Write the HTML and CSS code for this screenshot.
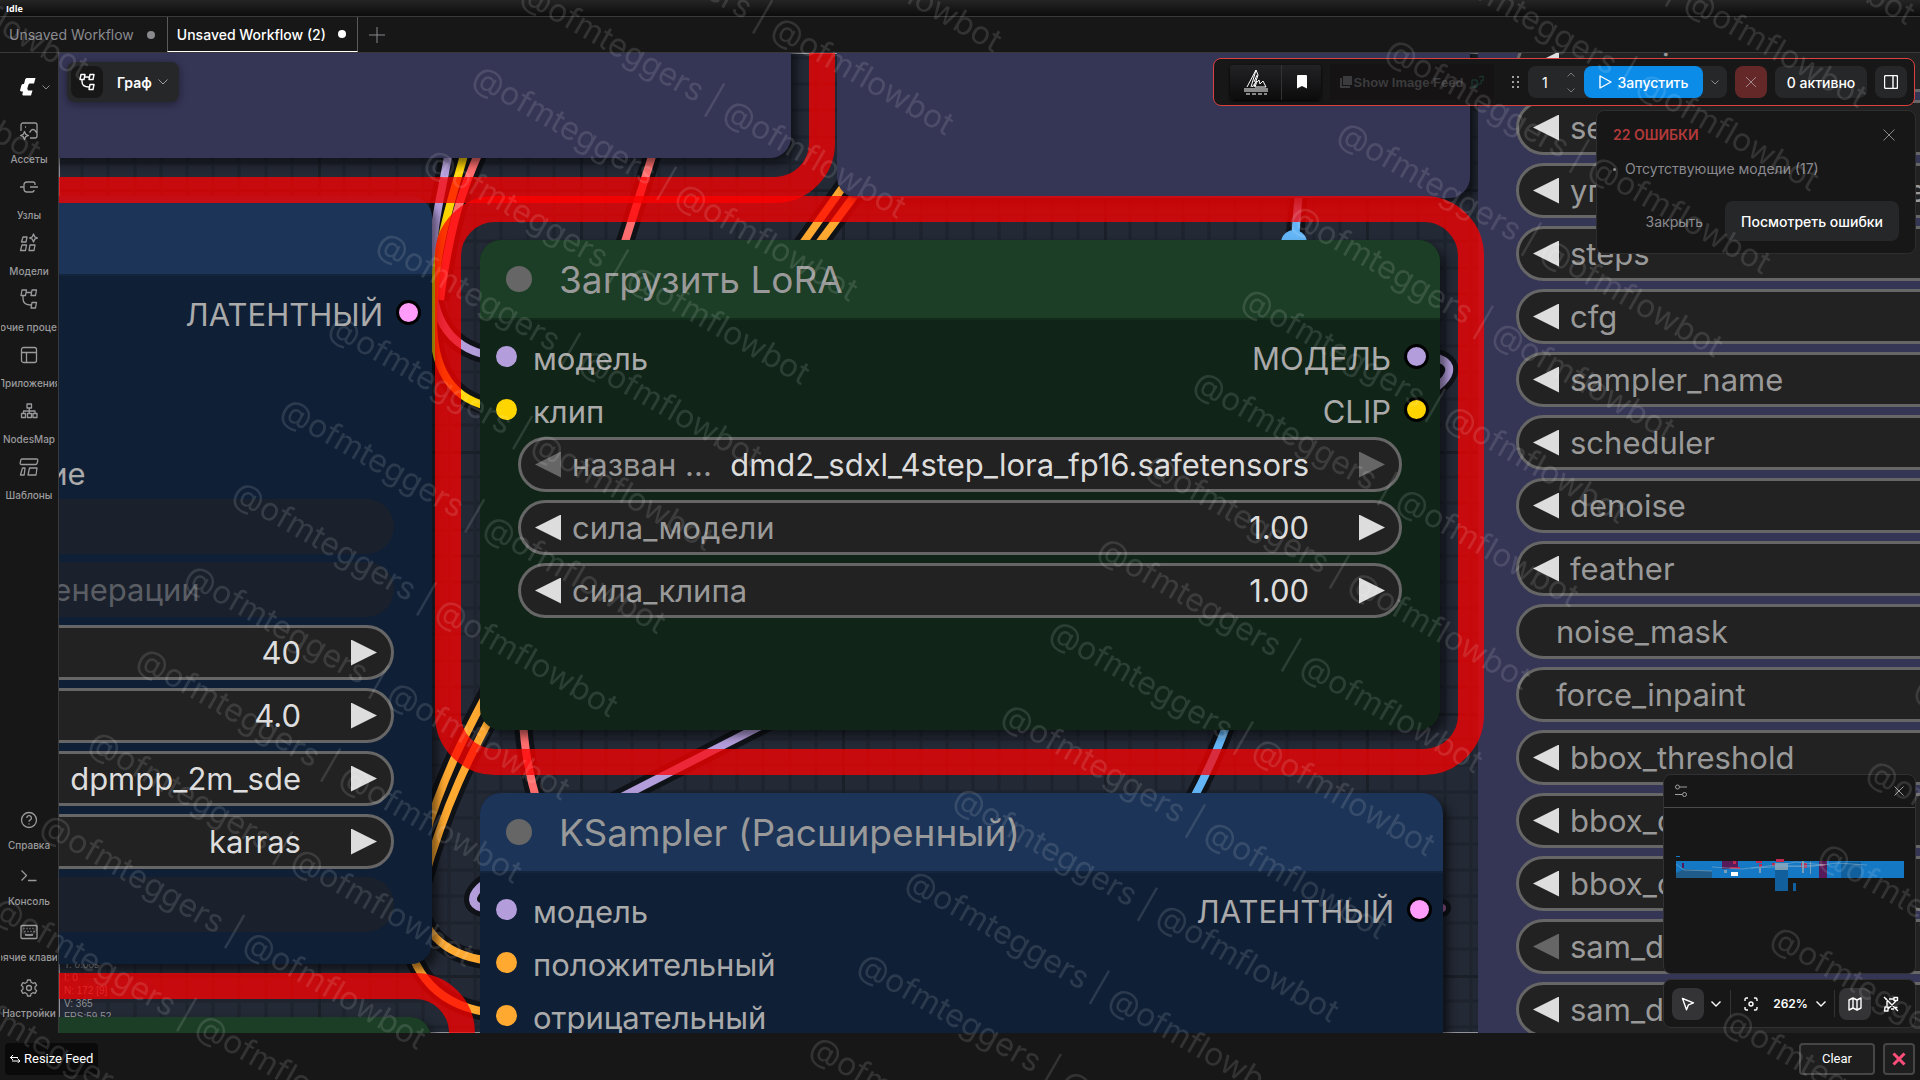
FILE: index.html
```html
<!DOCTYPE html>
<html lang="ru">
<head>
    <meta charset="UTF-8">
    <meta name="viewport" content="width=device-width, initial-scale=1.0">
    <title>Unsaved Workflow (2)</title>
    <link rel="stylesheet" href="styles.css">
</head>
<body>
    <header class="status-bar">Idle</header>

    <nav class="tabs">
        <button class="tab" type="button">Unsaved Workflow <span class="tab-dot"></span></button>
        <button class="tab active" type="button">Unsaved Workflow (2) <span class="tab-dot"></span></button>
        <button class="tab-add" type="button" aria-label="New workflow">
            <svg width="16" height="16" viewBox="0 0 16 16"><path d="M8 0v16M0 8h16"/></svg>
        </button>
    </nav>

    <div class="workspace">
        <aside class="sidebar">
            <button class="logo" type="button" aria-label="Menu">
                <svg width="16" height="18" viewBox="0 0 16 18"><path class="solid" d="M6.500 0H15.500L14 5.500H9.500L8.500 6.500L7.300 10.500L8 12.500H12.500L11 17.500H3L2.300 16.500L3 13.500H1L0 12.500L1.500 7L2.500 6H4L5.300 1Z"/></svg>
                <svg width="8" height="5" viewBox="0 0 8 5"><path d="M.5 .5l3.500 3.500l3.500-3.500"/></svg>
            </button>
            <div class="side-group">
                <button class="side-item" type="button">
                    <svg width="20" height="20" viewBox="0 0 20 20"><path d="M2 10V4a2 2 0 0 1 2-2h12a2 2 0 0 1 2 2v11a2 2 0 0 1-2 2h-5M18 12l-2.500-3q-1.500-1-3 0l-2 2.500M5.500 10.500l1.200 2.800 2.800 1.200-2.800 1.200-1.200 2.800-1.200-2.800-2.800-1.200 2.800-1.200zM6 6h1"/></svg>
                    <span>Ассеты</span>
                </button>
                <button class="side-item" type="button">
                    <svg width="20" height="20" viewBox="0 0 20 20"><path d="M1 10h4M15 10h4M16 8V7a2 2 0 0 0-2-2H8a3 3 0 0 0-3 3v4a3 3 0 0 0 3 3h5a2 2 0 0 0 2-2M11 10h4"/></svg>
                    <span>Узлы</span>
                </button>
                <button class="side-item" type="button">
                    <svg width="20" height="20" viewBox="0 0 20 20"><path d="M4 4h4l-1 5H2.500zM3 12h4.500l-1 5.500H1.500zM11 12h5l-1 5.500h-5zM14.500 1l1.200 2.800L18.500 5l-2.800 1.200L14.500 9l-1.200-2.800L10.500 5l2.800-1.200z"/></svg>
                    <span>Модели</span>
                </button>
                <button class="side-item" type="button">
                    <svg width="20" height="20" viewBox="0 0 20 20"><path d="M3 1h4.500l-1 5.500H2zM13 1h4.500l-1 5.500H12zM13 13.500h4.500l-1 5.500H12zM7.500 3.500h5M4 6.500v3q0 6.500 8 6.500"/></svg>
                    <span>Рабочие процессы</span>
                </button>
                <button class="side-item" type="button">
                    <svg width="20" height="20" viewBox="0 0 20 20"><rect x="2.500" y="2.500" width="15" height="15" rx="2"/><path d="M2.500 7.500h15M7.500 7.500v10"/></svg>
                    <span>Приложения</span>
                </button>
                <button class="side-item" type="button">
                    <svg width="20" height="20" viewBox="0 0 20 20"><path d="M8 3h4.500v4H8zM2.500 12.500h4v4h-4zM8.500 12.500h4v4h-4zM14 12.500h4v4h-4zM10.300 7v5.500M4.500 12.500V10h11.500v2.500"/></svg>
                    <span>NodesMap</span>
                </button>
                <button class="side-item" type="button">
                    <svg width="20" height="20" viewBox="0 0 20 20"><path d="M3 2h14.500q1.500 0 1.300 1.500l-.6 2.500q-.3 1.500-1.700 1.500H2.500Q1 7.500 1.200 6l.5-2.500Q2 2 3 2zM3.500 11h2.500l-.8 7H1.500zM10.500 11h7.500l-1 7H9z"/></svg>
                    <span>Шаблоны</span>
                </button>
            </div>
            <div class="side-group side-bottom">
                <button class="side-item" type="button">
                    <svg width="20" height="20" viewBox="0 0 20 20"><circle cx="10" cy="10" r="7.500"/><path d="M7.800 8a2.300 2.300 0 1 1 3.500 1.900Q10 10.600 10 11.700M10 13.500v1"/></svg>
                    <span>Справка</span>
                </button>
                <button class="side-item" type="button">
                    <svg width="20" height="20" viewBox="0 0 20 20"><path d="M2.500 4.500l5 5l-5 5M9 14.500h8.500"/></svg>
                    <span>Консоль</span>
                </button>
                <button class="side-item" type="button">
                    <svg width="20" height="20" viewBox="0 0 20 20"><rect x="2" y="3.500" width="16" height="13" rx="1"/><path d="M4.500 6.500h1M7.500 6.500h1M10.500 6.500h1M13.500 6.500h1M5.500 9.500h1M8.500 9.500h1M11.500 9.500h1M14.500 9.500h1M6 13h8"/></svg>
                    <span>Горячие клавиши</span>
                </button>
                <button class="side-item" type="button">
                    <svg width="20" height="20" viewBox="0 0 20 20"><circle cx="10" cy="10" r="2.500"/><path d="M8.500 2h3l.6 2.300 1.800 1 2.200-.7 1.600 2.700-1.700 1.600v2.200l1.700 1.600-1.600 2.700-2.200-.7-1.800 1-.6 2.300h-3l-.6-2.300-1.800-1-2.200.7-1.600-2.700L4 11.100V8.900L2.300 7.300l1.600-2.700 2.200.7 1.800-1z"/></svg>
                    <span>Настройки</span>
                </button>
            </div>
        </aside>

        <main class="canvas">
            <!-- grid and links, in window coordinates -->
            <svg class="links" width="100%" height="100%">
                <defs>
                    <pattern id="grid" patternUnits="userSpaceOnUse" x="318" y="189" width="262" height="262">
                        <path class="grid-minor" d="M26 0v262M52 0v262M79 0v262M105 0v262M131 0v262M157 0v262M183 0v262M210 0v262M236 0v262M0 26h262M0 52h262M0 79h262M0 105h262M0 131h262M0 157h262M0 183h262M0 210h262M0 236h262"/>
                        <path class="grid-major" d="M0 0v262M0 0h262"/>
                    </pattern>
                    <path id="l1" d="M449 150C443 190 432 220 432 275C432 330 460 356 506 357"/>
                    <path id="l2" d="M466 148C452 200 433 250 433 320C433 380 460 406 506 409"/>
                    <path id="l3" d="M480 150C462 190 450 225 440 300"/>
                    <path id="l4" d="M654 150L624 245"/>
                    <path id="l5" d="M848 180L798 250"/>
                    <path id="l6" d="M866 180L814 250"/>
                    <path id="l7" d="M1299 190L1295 240"/>
                    <path id="l8" d="M1420 355C1459 358 1459 376 1420 398"/>
                    <path id="l9" d="M800 706L600 808"/>
                    <path id="l10" d="M500 874C464 892 462 913 506 909"/>
                    <path id="l11" d="M1232 710C1222 740 1210 768 1190 805"/>
                    <path id="l12" d="M522 700C523 735 526 765 538 805"/>
                    <path id="l13" d="M497 675C470 725 445 770 424 840"/>
                    <path id="l14" d="M500 700C470 755 445 805 424 880"/>
                    <path id="l15" d="M418 900C424 940 455 961 506 962"/>
                    <path id="l16" d="M405 930C415 985 450 1012 506 1014"/>
                    <path id="l17" stroke-linecap="round" d="M1420 908h22"/>
                </defs>
                <g transform="translate(-59 -53)">
                    <rect x="59" y="53" width="100%" height="100%" fill="url(#grid)"/>
                    <g class="outline">
                        <use href="#l1"/><use href="#l3"/><use href="#l4"/><use href="#l5"/><use href="#l6"/><use href="#l7"/>
                        <use href="#l8"/><use href="#l9"/><use href="#l10"/><use href="#l11"/><use href="#l12"/><use href="#l13"/>
                        <use href="#l14"/><use href="#l15"/><use href="#l16"/><use href="#l17"/><use href="#l2"/>
                    </g>
                    <g class="link">
                        <use class="model" href="#l1"/>
                        <use class="vae" href="#l3"/>
                        <use class="clip" href="#l2"/>
                        <use class="vae" href="#l4"/>
                        <use class="cond" href="#l5"/>
                        <use class="cond" href="#l6"/>
                        <use class="image" href="#l7"/>
                        <use class="model" href="#l8"/>
                        <use class="model" href="#l9"/>
                        <use class="model" href="#l10"/>
                        <use class="image" href="#l11"/>
                        <use class="vae" href="#l12"/>
                        <use class="cond" href="#l13"/>
                        <use class="cond" href="#l14"/>
                        <use class="cond" href="#l15"/>
                        <use class="cond" href="#l16"/>
                        <use class="latent" href="#l17"/>
                    </g>
                    <circle class="link-center" cx="1294" cy="243" r="13"/>
                </g>
            </svg>

            <div class="stats">T: 0.00s<br>I: 0<br>N: 172 [9]<br>V: 365<br>FPS:59.52</div>

            <section class="node purple node-top-left"></section>
            <section class="node purple node-top-mid"></section>

            <section class="node purple node-detailer">
                <div class="widgets">
                    <div class="widget"><button class="prev" type="button" aria-label="-"></button><label>max_size</label></div>
                    <div class="widget"><button class="prev" type="button" aria-label="-"></button><label>seed</label></div>
                    <div class="widget"><button class="prev" type="button" aria-label="-"></button><label>управление после генерации</label></div>
                    <div class="widget"><button class="prev" type="button" aria-label="-"></button><label>steps</label></div>
                    <div class="widget"><button class="prev" type="button" aria-label="-"></button><label>cfg</label></div>
                    <div class="widget"><button class="prev" type="button" aria-label="-"></button><label>sampler_name</label></div>
                    <div class="widget"><button class="prev" type="button" aria-label="-"></button><label>scheduler</label></div>
                    <div class="widget"><button class="prev" type="button" aria-label="-"></button><label>denoise</label></div>
                    <div class="widget"><button class="prev" type="button" aria-label="-"></button><label>feather</label></div>
                    <div class="widget toggle"><label>noise_mask</label></div>
                    <div class="widget toggle"><label>force_inpaint</label></div>
                    <div class="widget"><button class="prev" type="button" aria-label="-"></button><label>bbox_threshold</label></div>
                    <div class="widget"><button class="prev" type="button" aria-label="-"></button><label>bbox_dilation</label></div>
                    <div class="widget"><button class="prev" type="button" aria-label="-"></button><label>bbox_crop_factor</label></div>
                    <div class="widget"><button class="prev" type="button" aria-label="-" disabled></button><label>sam_detection_hint</label></div>
                    <div class="widget"><button class="prev" type="button" aria-label="-"></button><label>sam_dilation</label></div>
                </div>
            </section>

            <section class="node blue node-sampler-left">
                <h2 class="node-title"></h2>
                <div class="slots">
                    <div class="slot"><span class="out">ЛАТЕНТНЫЙ<i class="dot latent ring"></i></span></div>
                    <div class="slot"></div>
                    <div class="slot"></div>
                    <div class="slot"><span class="in"><i class="dot latent"></i>скрытое_изображение</span></div>
                </div>
                <div class="widgets">
                    <div class="widget off"></div>
                    <div class="widget off"><label>управление после генерации</label></div>
                    <div class="widget"><label for="w-steps">steps</label><input id="w-steps" value="40"><button class="next" type="button" aria-label="+"></button></div>
                    <div class="widget"><label for="w-cfg">cfg</label><input id="w-cfg" value="4.0"><button class="next" type="button" aria-label="+"></button></div>
                    <div class="widget"><label for="w-sampler">имя</label><input id="w-sampler" value="dpmpp_2m_sde"><button class="next" type="button" aria-label="+"></button></div>
                    <div class="widget"><label for="w-sched">план</label><input id="w-sched" value="karras"><button class="next" type="button" aria-label="+"></button></div>
                    <div class="widget off"></div>
                </div>
            </section>

            <section class="node green node-bottom-left"><h2 class="node-title"></h2></section>

            <section class="node green node-lora">
                <h2 class="node-title"><i class="collapse"></i>Загрузить LoRA</h2>
                <div class="slots">
                    <div class="slot"><span class="in"><i class="dot model"></i>модель</span><span class="out">МОДЕЛЬ<i class="dot model ring"></i></span></div>
                    <div class="slot"><span class="in"><i class="dot clip"></i>клип</span><span class="out">CLIP<i class="dot clip ring"></i></span></div>
                </div>
                <div class="widgets">
                    <div class="widget"><button class="prev" type="button" aria-label="-" disabled></button><label for="w-name">назван ...</label><input id="w-name" value="dmd2_sdxl_4step_lora_fp16.safetensors"><button class="next" type="button" aria-label="+" disabled></button></div>
                    <div class="widget"><button class="prev" type="button" aria-label="-"></button><label for="w-sm">сила_модели</label><input id="w-sm" value="1.00"><button class="next" type="button" aria-label="+"></button></div>
                    <div class="widget"><button class="prev" type="button" aria-label="-"></button><label for="w-sc">сила_клипа</label><input id="w-sc" value="1.00"><button class="next" type="button" aria-label="+"></button></div>
                </div>
            </section>

            <section class="node blue node-ksampler">
                <h2 class="node-title"><i class="collapse"></i>KSampler (Расширенный)</h2>
                <div class="slots">
                    <div class="slot"><span class="in"><i class="dot model"></i>модель</span><span class="out">ЛАТЕНТНЫЙ<i class="dot latent ring"></i></span></div>
                    <div class="slot"><span class="in"><i class="dot cond"></i>положительный</span></div>
                    <div class="slot"><span class="in"><i class="dot cond"></i>отрицательный</span></div>
                </div>
            </section>

            <div class="frame frame-top"></div>
            <div class="frame frame-lora"></div>
            <div class="frame frame-bottom"></div>

            <div class="graph-menu">
                <button class="graph-icon" type="button" aria-label="Graph">
                    <svg width="16" height="18" viewBox="0 0 16 18"><path d="M2 1.500h4l-1 5H1zM11 1.500h4l-1 5h-4zM11 11.500h4l-1 5h-4zM6 4h4M3 6.500v2q0 5.500 7 5.500"/></svg>
                </button>
                <button class="graph-name" type="button">Граф
                    <svg width="10" height="6" viewBox="0 0 10 6"><path d="M.5 .5l4.500 4.500l4.500-4.500"/></svg>
                </button>
            </div>

            <div class="actionbar">
                <div class="group">
                    <button type="button" class="crystools" aria-label="Monitor">
                        <svg width="26" height="26" viewBox="0 0 26 26"><path d="M4 18L13 1l2 5-4 12M13 1L8 18M14 12l-5 6M11 13l3-7M15 18h-3q1-5 4-7l1 4 3-3 3 6zM1 20h24M1 22h24M3 25h4M9 25h4M15 25h4M21 25h3"/></svg>
                    </button>
                    <button type="button" class="bookmark" aria-label="Bookmark">
                        <svg width="12" height="14" viewBox="0 0 12 14"><path class="solid" d="M2 0h8q1 0 1 1v12.500L6 11l-5 2.500V1q0-1 1-1z"/></svg>
                    </button>
                </div>
                <button class="feed-toggle" type="button">
                    <svg width="12" height="12" viewBox="0 0 12 12"><path class="solid" d="M3 0h9v9H3zM0 2h2v8h8v2H0z"/></svg>Show Image Feed <svg class="bird" width="14" height="14" viewBox="0 0 14 14"><path d="M2 5h5v7H2zM7 9q6 1 4-4M9 2l4-1v5"/></svg>
                </button>
                <svg class="drag" width="8" height="14" viewBox="0 0 8 14"><path d="M0 2h2M5 2h2M0 7h2M5 7h2M0 12h2M5 12h2"/></svg>
                <div class="run-group">
                    <input class="batch" value="1" aria-label="Batch count">
                    <span class="spin">
                        <svg width="8" height="5" viewBox="0 0 8 5"><path d="M.5 4.500l3.500-3.500l3.500 3.500"/></svg>
                        <svg width="8" height="5" viewBox="0 0 8 5"><path d="M.5 .5l3.500 3.500l3.500-3.500"/></svg>
                    </span>
                    <button class="run" type="button">
                        <svg width="13" height="14" viewBox="0 0 13 14"><path d="M1 1l11 6l-11 6z"/></svg>Запустить
                    </button>
                    <button class="run-more" type="button" aria-label="More">
                        <svg width="8" height="5" viewBox="0 0 8 5"><path d="M.5 .5l3.500 3.500l3.500-3.500"/></svg>
                    </button>
                </div>
                <button class="stop" type="button" aria-label="Stop"><svg width="10" height="10" viewBox="0 0 10 10"><path d="M0 0l10 10M10 0l-10 10"/></svg></button>
                <button class="active-count" type="button">0 активно</button>
                <button class="panel" type="button" aria-label="Panel"><svg width="14" height="14" viewBox="0 0 14 14"><rect x=".5" y=".5" width="13" height="13" rx="1.500"/><path d="M9 .5v13"/></svg></button>
            </div>

            <div class="toast">
                <div class="toast-head">
                    <strong>22 ОШИБКИ</strong>
                    <button type="button" aria-label="Close"><svg width="12" height="12" viewBox="0 0 12 12"><path d="M.5 .5l11 11M11.500 .5l-11 11"/></svg></button>
                </div>
                <ul><li>Отсутствующие модели (17)</li></ul>
                <div class="toast-actions">
                    <button type="button" class="dismiss">Закрыть</button>
                    <button type="button" class="view">Посмотреть ошибки</button>
                </div>
            </div>

            <div class="corner">
                <div class="minimap">
                    <div class="minimap-head">
                        <button type="button" aria-label="Settings"><svg width="12" height="14" viewBox="0 0 12 14"><circle cx="2.500" cy="3" r="2"/><circle cx="9.500" cy="10.500" r="2"/><path d="M5 3h7M0 10.500h7"/></svg></button>
                        <button type="button" aria-label="Close"><svg width="10" height="10" viewBox="0 0 10 10"><path d="M.5 .5l9 9M9.500 .5l-9 9"/></svg></button>
                    </div>
                    <svg class="map" width="228" height="36" viewBox="0 0 228 36">
                        <path fill="#1478c4" d="M0 5h37v12H0zM0 17h8v1H0zM36 5h192v17H36zM0 0h4v1H0z"/>
                        <path fill="#1f5c8a" d="M8 13l28 2v7H0v-5z"/>
                        <path fill="#115f9c" d="M99 12h13v23H99zM117 27h3v8h-3zM165 6h20v16h-20z"/>
                        <path fill="#561b58" d="M46 5h16v8H46zM143 5h8v17h-8zM6 7h2v5H6z"/>
                        <path fill="#c02850" d="M54 11h10v2H54zM80 5h6v2h-6zM83 8h3v3h-3zM100 3h8v3h-8zM96 7h5v3h-5zM125 7h6v5h-6zM144 8h5v2h-5zM57 5h3v3h-3z"/>
                        <path fill="#7d9db5" d="M99 7h13v7H99zM126 5h2v12h-2zM134 6h1v12h-1zM83 12h2v5h-2zM48 14h3v3h-3z"/>
                        <path fill="none" stroke="#7dabcc" stroke-opacity=".6" d="M0 8l8 6 28 1M36 11l30 2 35-4 30 2 30-4 30 2M75 12l70-3M100 10l20-4 28 3"/>
                        <path fill="#fff" d="M55 16h7v4h-7z"/>
                    </svg>
                </div>
                <div class="view-controls">
                    <button type="button" class="on" aria-label="Select"><svg width="14" height="14" viewBox="0 0 14 14"><path d="M1.500 1.500l11 4.300-5 2-2 5z"/></svg></button>
                    <button type="button" class="small" aria-label="More"><svg width="10" height="6" viewBox="0 0 10 6"><path d="M.5 .5l4.500 4.500l4.500-4.500"/></svg></button>
                    <span class="divider"></span>
                    <button type="button" aria-label="Fit"><svg width="14" height="14" viewBox="0 0 14 14"><circle cx="7" cy="7" r="2"/><path d="M1 4V2.500q0-1.500 1.500-1.500H4M10 1h1.500Q13 1 13 2.500V4M13 10v1.500q0 1.500-1.500 1.500H10M4 13H2.500Q1 13 1 11.500V10"/></svg></button>
                    <button type="button" class="zoom">262% <svg width="10" height="6" viewBox="0 0 10 6"><path d="M.5 .5l4.500 4.500l4.500-4.500"/></svg></button>
                    <span class="divider"></span>
                    <button type="button" class="on" aria-label="Minimap"><svg width="14" height="14" viewBox="0 0 14 14"><path d="M1 3l4-2 4 2 4-2v10l-4 2-4-2-4 2zM5 1v10M9 3v10"/></svg></button>
                    <button type="button" class="links-off" aria-label="Hide links"><svg width="16" height="16" viewBox="0 0 16 16"><path d="M1 1l14 14M2 11h3v4H1.500zM11 1.500h3.500v3H11zM11.500 11.500h3M6 3h5M4 5v5M8 13h3M13 5L5 13M3 2v2"/></svg></button>
                </div>
            </div>
        </main>
    </div>

    <footer class="feed-bar">
        <button class="resize" type="button"><svg width="10" height="8" viewBox="0 0 10 8"><path d="M0 2.500h8M3 0L.5 2.500 3 5M2 6h8M7.500 3.500L10 6 7.500 8"/></svg>Resize Feed</button>
        <div class="feed-actions">
            <button class="clear" type="button">Clear</button>
            <button class="close" type="button" aria-label="Close"><svg width="14" height="14" viewBox="0 0 14 14"><path d="M1.500 1.500l11 11M12.500 1.500l-11 11"/></svg></button>
        </div>
    </footer>

    <svg class="watermark" width="100%" height="100%" aria-hidden="true">
        <g id="marks" transform="rotate(30)"></g>
    </svg>

    <script>
        // repeat the watermark line over the whole window
        const marks = document.getElementById('marks');
        const stepX = 777;
        const stepY = 96;
        for (let row = -9; row <= 12; row++) {
            for (let col = -1; col <= 2; col++) {
                const text = document.createElementNS('http://www.w3.org/2000/svg', 'text');
                text.setAttribute('x', 449 + col * stepX);
                text.setAttribute('y', -163 + row * stepY);
                text.textContent = '@ofmteggers | @ofmflowbot';
                marks.appendChild(text);
            }
        }
    </script>
</body>
</html>
```
FILE: styles.css
```css
* {
    box-sizing: border-box;
}

body {
    margin: 0;
    height: 100vh;
    display: flex;
    flex-direction: column;
    overflow: hidden;
    background: #171718;
    color: #fff;
    font-family: Inter, "Liberation Sans", sans-serif;
    font-size: 14px;
}

button {
    display: flex;
    align-items: center;
    justify-content: center;
    margin: 0;
    padding: 0;
    border: none;
    background: none;
    color: inherit;
    font: inherit;
    white-space: nowrap;
    cursor: pointer;
}

input {
    min-width: 0;
    padding: 0;
    border: none;
    outline: none;
    background: none;
    color: inherit;
    font: inherit;
}

svg {
    flex: none;
    fill: none;
    stroke: currentColor;
}

svg .solid {
    fill: currentColor;
    stroke: none;
}

/* top bars */

.status-bar {
    flex: none;
    height: 16px;
    padding-left: 6px;
    background: linear-gradient(#242424, #0c0c0c);
    font: bold 9px/17px "Open Sans", sans-serif;
}

.tabs {
    flex: none;
    display: flex;
    height: 37px;
    border-top: 1px solid #39393b;
    border-bottom: 1px solid #39393b;
}

.tab {
    gap: 13px;
    padding: 0 12px 0 9px;
    color: #8a8a8e;
}

.tab.active {
    gap: 12px;
    padding: 0 11px 0 9px;
    border: 1px solid #5a5a5c;
    border-top: none;
    border-bottom-color: #fff;
    color: #fff;
    font-weight: 500;
}

.tab-dot {
    width: 8px;
    height: 8px;
    border-radius: 50%;
    background: currentColor;
}

.tab-add {
    padding: 0 11px;
    color: #8a8a8e;
}

.workspace {
    flex: 1;
    display: flex;
    min-height: 0;
}

/* sidebar */

.sidebar {
    flex: none;
    display: flex;
    flex-direction: column;
    width: 59px;
    padding: 25px 0 14px;
    border-right: 1px solid #39393b;
    color: #9a9a9c;
}

.logo {
    gap: 6px;
    padding-left: 11px;
    color: #8a8a8e;
}

.logo svg:first-child {
    color: #fff;
}

.side-group {
    display: flex;
    flex-direction: column;
    gap: 12px;
    margin-top: 25px;
}

.side-item {
    flex-direction: column;
    gap: 12px;
    width: 56px;
    margin-left: 1px;
    overflow: hidden;
    font-size: 10px;
    font-weight: 500;
    line-height: 12px;
}

.side-item svg {
    stroke-width: 1.3;
    stroke-linejoin: round;
}

.side-bottom {
    gap: 15px;
    margin-top: auto;
}

.side-bottom .side-item {
    gap: 9px;
}

/* graph canvas */

.canvas {
    position: relative;
    flex: 1;
    min-width: 0;
    overflow: hidden;
    background: #232935;
}

.links {
    position: absolute;
    inset: 0;
}

.grid-minor,
.grid-major {
    stroke: #1e232e;
    stroke-width: 3;
}

.grid-major {
    stroke: #1a1f28;
    stroke-width: 6;
}

.outline {
    stroke: #0f1217;
    stroke-width: 18;
}

.link {
    stroke-width: 8;
}

.link .model { stroke: #b39ddb; }
.link .clip { stroke: #ffd500; }
.link .vae { stroke: #ff6e6e; }
.link .cond { stroke: #ffa931; }
.link .image { stroke: #64b5f6; }
.link .latent { stroke: #a4629f; }

.link-center {
    fill: #64b5f6;
    stroke: none;
}

.stats {
    position: absolute;
    left: 5px;
    top: 905px;
    color: #8f9196;
    font: 10px/13px "Liberation Sans", sans-serif;
}

.node {
    position: absolute;
    border-radius: 21px;
    box-shadow: 6px 6px 8px rgba(0, 0, 0, .5);
    color: #aaa;
    font-size: 31px;
}

.purple { background: #353555; }
.green { background: #102518; }
.blue { background: #0f1f36; }

.node-top-left { left: -60px; top: -60px; width: 792px; height: 165px; }
.node-top-mid { left: 778px; top: -60px; width: 633px; height: 205px; }
.node-detailer { left: 1419px; top: -60px; width: 700px; height: 1200px; padding-top: 44px; }
.node-sampler-left { left: -373px; top: 143px; width: 746px; height: 768px; }
.node-bottom-left { left: -100px; top: 964px; width: 472px; height: 200px; }
.node-lora { left: 421px; top: 187px; width: 960px; height: 490px; }
.node-ksampler { left: 421px; top: 740px; width: 963px; height: 400px; }

.node-title {
    display: flex;
    align-items: center;
    gap: 27px;
    height: 80px;
    margin: 0;
    padding-left: 26px;
    border-radius: 21px 21px 0 0;
    border-bottom: 2px solid rgba(0, 0, 0, .3);
    color: #999;
    font-size: 37px;
    font-weight: 400;
}

.green .node-title { background: #1c3e26; }
.blue .node-title { background: #1c3457; }

.collapse {
    width: 26px;
    height: 26px;
    border-radius: 50%;
    background: #666;
}

.slots {
    padding: 10px 11px 1px 16px;
}

.slot {
    display: flex;
    align-items: center;
    height: 53px;
}

.in,
.out {
    display: flex;
    align-items: center;
    gap: 16px;
    padding-top: 3px;
}

.out {
    gap: 13px;
    margin-left: auto;
}

.dot {
    width: 21px;
    height: 21px;
    margin-bottom: 3px;
    border-radius: 50%;
}

.dot.ring {
    width: 25px;
    height: 25px;
    border: 3px solid #000;
}

.dot.model { background-color: #b39ddb; }
.dot.clip { background-color: #ffd500; }
.dot.cond { background-color: #ffa931; }
.dot.latent { background-color: #ff9cf9; }

.widgets {
    display: flex;
    flex-direction: column;
    gap: 8px;
    padding: 0 38px;
}

.widget {
    display: flex;
    align-items: center;
    height: 55px;
    padding: 0 14px;
    border: 3px solid #666;
    border-radius: 28px;
    background: #222;
    color: #ddd;
    white-space: nowrap;
}

.widget label {
    margin-left: 11px;
    color: #999;
}

.widget input {
    flex: 1;
    margin: 0 50px 0 4px;
    text-align: right;
}

.widget.toggle label {
    margin-left: 23px;
}

.widget.off {
    border-color: transparent;
    background: #1a212c;
}

.widget.off label {
    color: #5a5d63;
}

.prev,
.next {
    flex: none;
    width: 26px;
    height: 26px;
    background: #ddd;
    clip-path: polygon(100% 0, 100% 100%, 0 50%);
}

.next {
    clip-path: polygon(0 0, 100% 50%, 0 100%);
}

.prev:disabled,
.next:disabled {
    background: #666;
}

.frame {
    position: absolute;
    border: 26px solid rgba(255, 0, 0, .75);
    border-radius: 60px;
    pointer-events: none;
}

.frame-top { left: -80px; top: -60px; width: 856px; height: 210px; }
.frame-lora { left: 376px; top: 143px; width: 1049px; height: 579px; }
.frame-bottom { left: -80px; top: 920px; width: 496px; height: 200px; }

/* floating panels */

.graph-menu {
    position: absolute;
    left: 8px;
    top: 9px;
    display: flex;
    gap: 14px;
    padding: 4px 11px 4px 4px;
    border-radius: 8px;
    background: #262729;
    box-shadow: 0 2px 8px rgba(0, 0, 0, .4);
}

.graph-icon {
    width: 32px;
    height: 32px;
    border-radius: 8px;
    background: #171718;
}

.graph-name {
    gap: 6px;
    font-weight: 600;
}

.graph-name svg {
    color: #a0a0a3;
}

.actionbar {
    position: absolute;
    right: 5px;
    top: 5px;
    display: flex;
    align-items: center;
    height: 48px;
    padding: 0 7px 0 16px;
    border: 1px solid #d9423f;
    border-radius: 8px;
    background: #171718;
}

.group {
    display: flex;
    gap: 1px;
    border-radius: 4px;
    overflow: hidden;
    background: #333;
    box-shadow: 0 1px 3px #000;
}

.group button {
    width: 51px;
    height: 35px;
    background: linear-gradient(#222224, #0c0c0d);
}

.group .bookmark {
    width: 39px;
}

.feed-toggle {
    gap: 2px;
    width: 164px;
    height: 36px;
    margin-left: 9px;
    background: #151314;
    color: #3b3b3d;
    font: bold 13px "Liberation Sans", sans-serif;
}

.bird {
    margin-left: 5px;
    color: #1b4034;
}

.drag {
    margin: 0 8px 0 18px;
    color: #a0a0a3;
    stroke-width: 2;
}

.run-group {
    display: flex;
    align-items: center;
    height: 32px;
    border-radius: 8px;
    background: #262729;
}

.batch {
    width: 22px;
    margin-left: 12px;
    padding-left: 2px;
}

.spin {
    display: flex;
    flex-direction: column;
    gap: 11px;
    margin: 0 9px 0 5px;
    color: #7b7b7f;
}

.run {
    gap: 6px;
    width: 119px;
    height: 32px;
    border-radius: 8px;
    background: #0b8ce9;
    font-weight: 500;
}

.run svg,
.graph-icon svg,
.panel svg,
.view-controls svg {
    stroke-width: 1.4;
    stroke-linejoin: round;
}

.run-more {
    width: 24px;
    height: 32px;
    color: #8a8a8e;
}

.stop,
.panel {
    width: 32px;
    height: 32px;
    margin: 0 8px;
    border-radius: 8px;
    background: #652829;
    color: #a08a8b;
}

.active-count {
    width: 92px;
    height: 32px;
    border-radius: 8px;
    background: #262729;
    font-weight: 500;
}

.panel {
    margin-right: 0;
    background: #262729;
    color: #fff;
}

.toast {
    position: absolute;
    right: 4px;
    top: 57px;
    display: flex;
    flex-direction: column;
    width: 320px;
    padding: 15px 16px 12px;
    border: 1px solid #2e2e31;
    border-radius: 8px;
    background: #171718;
    color: #8a8a8e;
}

.toast-head {
    display: flex;
    justify-content: space-between;
    height: 17px;
    padding-right: 4px;
}

.toast-head strong {
    color: #b33a3a;
    line-height: 17px;
    font-weight: 600;
}

.toast ul {
    margin: 17px 0 23px;
    padding: 0;
    line-height: 18px;
    list-style: none;
}

.toast li {
    display: flex;
    align-items: center;
    gap: 9px;
}

.toast li::before {
    content: "";
    width: 3px;
    height: 3px;
    border-radius: 50%;
    background: currentColor;
}

.toast-actions {
    display: flex;
    justify-content: flex-end;
    gap: 22px;
}

.view {
    height: 40px;
    padding: 0 16px;
    border-radius: 8px;
    background: #262729;
    color: #fff;
    font-weight: 500;
}

.corner {
    position: absolute;
    right: 4px;
    bottom: 5px;
    display: flex;
    flex-direction: column;
    gap: 5px;
    width: 253px;
}

.minimap,
.view-controls {
    border: 1px solid #313133;
    border-radius: 8px;
    background: #171718;
}

.minimap {
    height: 200px;
}

.minimap-head {
    display: flex;
    justify-content: space-between;
    height: 33px;
    padding: 0 11px;
    border-bottom: 1px solid #4a4a4c;
    color: #a0a0a3;
}

.map {
    display: block;
    margin: 48px 0 0 12px;
    stroke: none;
}

.view-controls {
    display: flex;
    align-items: center;
    height: 49px;
    padding: 0 8px;
}

.view-controls button {
    width: 32px;
    height: 32px;
    border-radius: 8px;
}

.view-controls .on {
    background: #343436;
}

.view-controls .small {
    width: 24px;
}

.view-controls .zoom {
    gap: 8px;
    width: 65px;
    font-size: 12px;
    font-weight: 600;
}

.divider {
    width: 1px;
    height: 27px;
    margin: 0 4px 0 2px;
    background: #333335;
}

.links-off {
    margin-left: auto;
}

/* image feed */

.feed-bar {
    flex: none;
    display: flex;
    align-items: center;
    justify-content: space-between;
    height: 47px;
    padding: 4px 5px 0;
    font: 13px Roboto, sans-serif;
}

.resize {
    gap: 4px;
    height: 32px;
    padding: 0 5px;
    border-radius: 4px;
    background: #0a0a0a;
}

.feed-actions {
    display: flex;
    gap: 8px;
}

.feed-actions button {
    height: 32px;
    border: 2px solid #464648;
    border-radius: 4px;
    background: #1e1e1f;
}

.feed-actions .clear {
    width: 76px;
}

.feed-actions .close {
    width: 32px;
    color: #ff4d79;
    stroke-width: 3;
}

.watermark {
    position: fixed;
    inset: 0;
    stroke: none;
    pointer-events: none;
}

.watermark text {
    fill: rgba(255, 255, 255, .12);
    font: 32px Inter, sans-serif;
}
```
